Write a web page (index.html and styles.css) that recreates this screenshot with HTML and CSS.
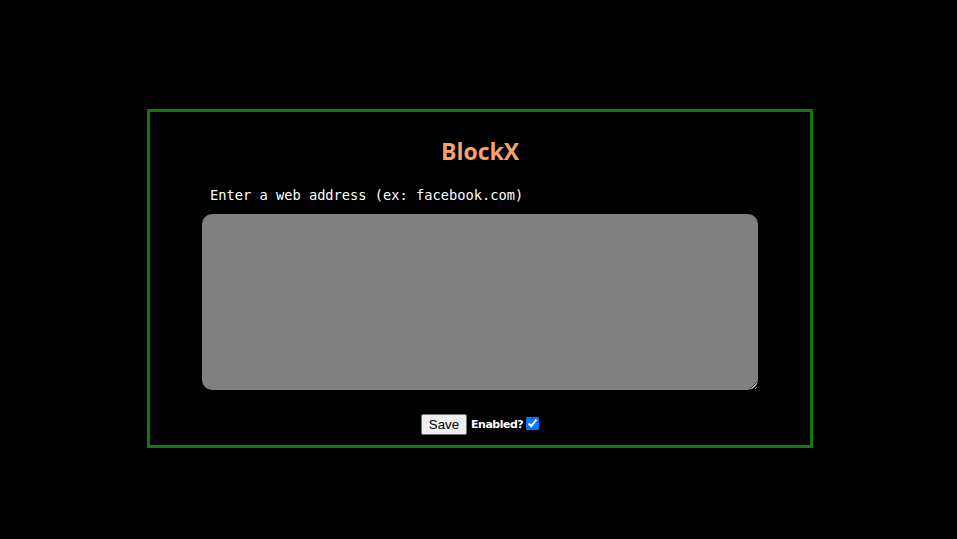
FILE: index.html
```html
<!DOCTYPE html>
<html>
<head>
<meta charset="utf-8">
<link rel="stylesheet" href="styles.css">
</head>
<body>
<div class="panel">
  <h1 class="title">BlockX</h1>
  <label class="label" for="sites">Enter a web address (ex: facebook.com)</label>
  <textarea id="sites" class="sites"></textarea>
  <div class="controls">
    <button class="save">Save</button>
    <span class="enabled">Enabled?</span>
    <input type="checkbox" class="check" checked>
  </div>
</div>
</body>
</html>
```
FILE: styles.css
```css
html, body {
  margin: 0;
  padding: 0;
  background: #000;
}
body {
  width: 957px;
  height: 539px;
  overflow: hidden;
}
.panel {
  box-sizing: border-box;
  width: 666px;
  height: 339px;
  margin: 109px 0 0 147px;
  border: 3px solid #107a10;
  display: flex;
  flex-direction: column;
  align-items: center;
}
.title {
  margin: 23px 0 0 0;
  font-family: "Open Sans", sans-serif;
  font-weight: 700;
  font-size: 23px;
  line-height: 32px;
  color: #f4a46c;
}
.label {
  align-self: flex-start;
  margin: 19px 0 0 60px;
  font-family: "DejaVu Sans Mono", monospace;
  font-size: 13.7px;
  line-height: 18px;
  color: #fff;
}
.sites {
  box-sizing: border-box;
  width: 556px;
  height: 176px;
  margin: 10px 0 0 0;
  background: #808080;
  border: none;
  border-radius: 10px;
  resize: vertical;
}
.controls {
  display: flex;
  align-items: center;
  margin-top: 24px;
  gap: 4px;
}
.save {
  font-family: "Liberation Sans", Arial, sans-serif;
  font-size: 13.3px;
  height: 21px;
  padding: 0 7px;
  background: #efefef;
  border: 1px solid #767676;
  border-radius: 2px;
  color: #000;
}
.enabled {
  font-family: "DejaVu Sans", sans-serif;
  font-weight: 700;
  font-size: 11px;
  letter-spacing: -0.5px;
  color: #fff;
}
.check {
  margin: 0 0 2px -1px;
  width: 13px;
  height: 13px;
}
```
